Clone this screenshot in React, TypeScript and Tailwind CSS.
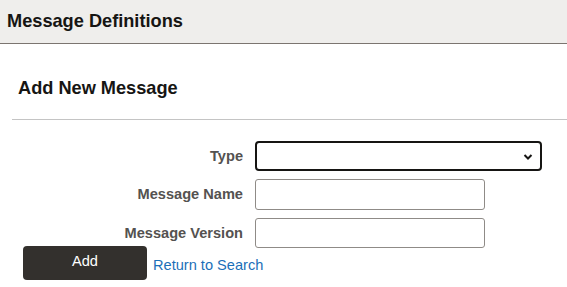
import React from "react";

export default function App() {
  const font = { fontFamily: '"Liberation Sans", Arial, sans-serif' };
  return (
    <div className="w-[567px] h-[287px] bg-white overflow-hidden" style={font}>
      <div className="h-[44px] bg-[#efeeec] border-b border-[#7b7570] flex items-center pl-[7px]">
        <h1 className="text-[18.2px] font-bold text-[#161513] leading-none">Message Definitions</h1>
      </div>
      <div className="ml-[12px] border-b border-[#c4c4c4] h-[76px] pl-[6px] pt-[33px]">
        <h2 className="text-[18.2px] font-bold text-[#161513] leading-[22px]">Add New Message</h2>
      </div>
      <div className="pt-[21px] grid grid-cols-[243px_auto] gap-x-[12px] gap-y-[8px] items-center">
        <label className="text-right text-[14.6px] font-bold text-[#545250] pt-[2px]">Type</label>
        <div className="relative w-[287px] h-[30px] border-2 border-[#161513] rounded-[4px] bg-white">
          <svg className="absolute right-[7px] top-[10px]" width="10" height="8" viewBox="0 0 10 8">
            <path d="M1.5 2 L5 5.5 L8.5 2" fill="none" stroke="#161513" strokeWidth="2" />
          </svg>
        </div>
        <label className="text-right text-[14.6px] font-bold text-[#545250] pt-[1px]">Message Name</label>
        <div className="w-[230px] h-[31px] border border-[#8f8b87] rounded-[3px] bg-white" />
        <label className="text-right text-[14.6px] font-bold text-[#545250] pt-[2px]">Message Version</label>
        <div className="w-[230px] h-[30px] border border-[#8f8b87] rounded-[3px] bg-white" />
      </div>
      <div className="-mt-[2px] pl-[23px] flex items-center gap-[6px]">
        <button className="w-[124px] h-[34px] bg-[#33302d] rounded-[4px] text-white text-[14.6px] pb-[2px]">Add</button>
        <a className="text-[14.6px] text-[#1b6fb8] pt-[6px]">Return to Search</a>
      </div>
    </div>
  );
}
